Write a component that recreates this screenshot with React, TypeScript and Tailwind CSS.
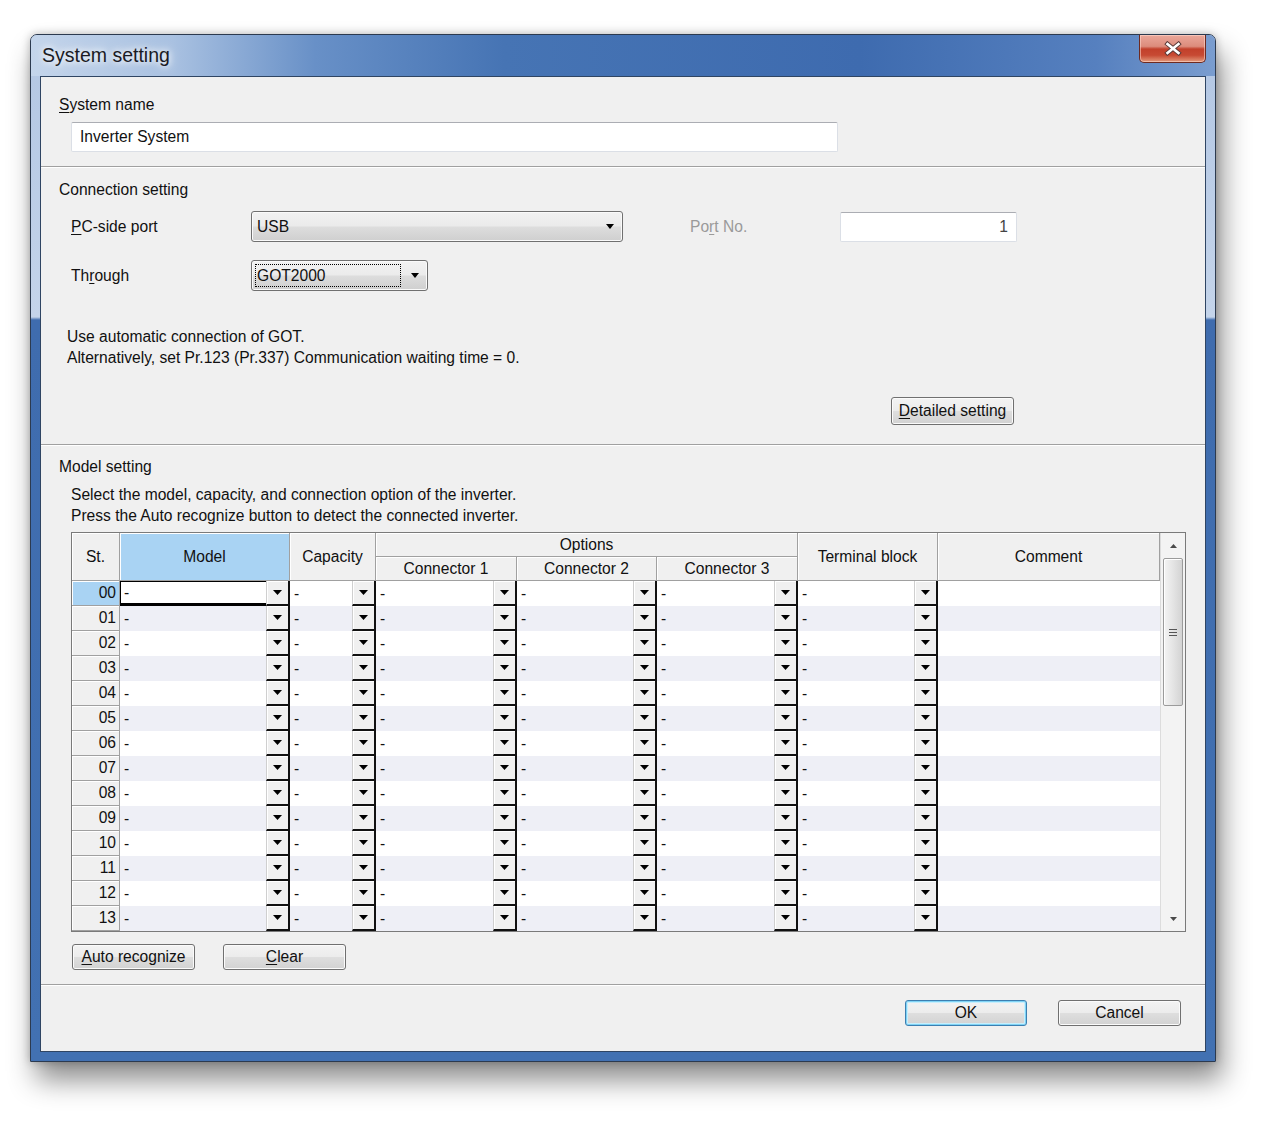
import React from "react";

const COLS = "grid grid-cols-[48px_170px_86px_141px_140px_141px_140px_222px]";
const HEAD =
  "flex items-center justify-center border-r border-b border-[#a0a0a0] bg-[#f0f0f0] shadow-[inset_1px_1px_0_#ffffff]";
const ROWS = ["00", "01", "02", "03", "04", "05", "06", "07", "08", "09", "10", "11", "12", "13"];

function Arrow({ w = 9, h = 5, color = "#000" }: { w?: number; h?: number; color?: string }) {
  return (
    <svg width={w} height={h} viewBox={`0 0 ${w} ${h}`} aria-hidden="true">
      <polygon points={`0,0 ${w},0 ${w / 2},${h}`} fill={color} />
    </svg>
  );
}

function WinButton({ children, wide = "w-[123px]", tall = "h-[26px]", primary = false }: {
  children: React.ReactNode;
  wide?: string;
  tall?: string;
  primary?: boolean;
}) {
  return (
    <button
      type="button"
      className={`${wide} ${tall} flex items-center justify-center rounded-[3px] border bg-[linear-gradient(to_bottom,#f3f3f3_0%,#ececec_48%,#dedede_52%,#d2d2d2_100%)] text-[15.6px] text-[#111] ${
        primary
          ? "border-[#3c7fb1] shadow-[inset_0_0_0_1px_#7fd3f5,inset_0_0_0_2px_#c8eefc]"
          : "border-[#707070] shadow-[inset_0_0_0_1px_#fbfbfb]"
      }`}
    >
      {children}
    </button>
  );
}

function Separator() {
  return <div className="h-[2px] border-t border-b border-t-[#a0a0a0] border-b-white" />;
}

function DropButton() {
  return (
    <span className="flex h-full w-[24px] items-center justify-center border-l border-l-[#cfcfcf] border-r-2 border-b-2 border-r-[#111] border-b-[#111] bg-[#f0f0f0] pb-[1px] shadow-[inset_1px_1px_0_#ffffff]">
      <Arrow />
    </span>
  );
}

function DropCell({ alt, editing = false }: { alt: boolean; editing?: boolean }) {
  return (
    <div className={`flex h-[25px] items-stretch ${alt ? "bg-[#eeeff6]" : "bg-white"}`}>
      {editing ? (
        <span className="flex flex-1 items-center border-t border-l border-b-[3px] border-black bg-white pl-[3px]">-</span>
      ) : (
        <span className="flex flex-1 items-center pl-[4px]">-</span>
      )}
      <DropButton />
    </div>
  );
}

function ScrollBar() {
  return (
    <div className="flex w-[25px] flex-col border-l border-l-[#dcdcdc] bg-[#f3f3f3]">
      <div className="flex h-[25px] items-center justify-center">
        <svg width="7" height="4" viewBox="0 0 7 4" aria-hidden="true">
          <polygon points="0,4 7,4 3.5,0" fill="#4a4a4a" />
        </svg>
      </div>
      <div className="mx-[2px] flex h-[148px] items-center justify-center rounded-[2px] border border-[#9b9b9b] bg-[linear-gradient(to_right,#f4f4f4,#e6e6e6_45%,#d3d3d3)] shadow-[inset_1px_1px_0_#ffffff]">
        <div className="flex flex-col gap-[2px]">
          <span className="h-[1px] w-[8px] bg-[#555]" />
          <span className="h-[1px] w-[8px] bg-[#555]" />
          <span className="h-[1px] w-[8px] bg-[#555]" />
        </div>
      </div>
      <div className="flex-1" />
      <div className="flex h-[25px] items-center justify-center">
        <Arrow w={7} h={4} color="#4a4a4a" />
      </div>
    </div>
  );
}

function ModelTable() {
  return (
    <div className="flex h-[400px] w-[1115px] border border-[#7a7a7a] bg-white">
      <div className="flex flex-col">
        <div className={`${COLS} grid-rows-[24px_24px]`}>
          <div className={`${HEAD} col-start-1 row-span-2 row-start-1`}>St.</div>
          <div className={`${HEAD} col-start-2 row-span-2 row-start-1 !bg-[#a9d3f3]`}>Model</div>
          <div className={`${HEAD} col-start-3 row-span-2 row-start-1`}>Capacity</div>
          <div className={`${HEAD} col-span-3 col-start-4 row-start-1`}>Options</div>
          <div className={`${HEAD} col-start-4 row-start-2`}>Connector 1</div>
          <div className={`${HEAD} col-start-5 row-start-2`}>Connector 2</div>
          <div className={`${HEAD} col-start-6 row-start-2`}>Connector 3</div>
          <div className={`${HEAD} col-start-7 row-span-2 row-start-1`}>Terminal block</div>
          <div className={`${HEAD} col-start-8 row-span-2 row-start-1`}>Comment</div>
        </div>
        {ROWS.map((r, i) => {
          const alt = i % 2 === 1;
          return (
            <div key={r} className={COLS}>
              <div
                className={`flex h-[25px] items-center justify-end border-r border-b border-[#a0a0a0] pr-[3px] shadow-[inset_1px_1px_0_#ffffff] ${
                  i === 0 ? "bg-[#a9d3f3]" : "bg-[#f0f0f0]"
                }`}
              >
                {r}
              </div>
              <DropCell alt={alt} editing={i === 0} />
              <DropCell alt={alt} />
              <DropCell alt={alt} />
              <DropCell alt={alt} />
              <DropCell alt={alt} />
              <DropCell alt={alt} />
              <div className={`h-[25px] ${alt ? "bg-[#eeeff6]" : "bg-white"}`} />
            </div>
          );
        })}
      </div>
      <ScrollBar />
    </div>
  );
}

export default function App() {
  return (
    <div className="min-h-[1127px] w-[1280px] bg-white pl-[30px] pt-[34px] font-['Liberation_Sans',Arial,sans-serif] text-[15.6px] text-[#111]">
      <div className="flex h-[1028px] w-[1186px] flex-col overflow-hidden rounded-t-[7px] border border-[#2c3a4f] bg-[linear-gradient(to_bottom,#b2c6e3_0px,#c4d4ea_282px,#3f6cae_285px,#4271b2_100%)] shadow-[6px_18px_28px_rgba(0,0,0,0.45),0_0_8px_rgba(0,0,0,0.25)]">
        {/* title bar */}
        <div className="flex h-[41px] items-start bg-[linear-gradient(to_right,#c4d5eb_0%,#a9c1e1_12%,#6890c7_24%,#4674b4_40%,#3e6baf_70%,#5680bf_90%,#7a9dcf_100%)]">
          <div className="flex h-full items-center pl-[11px] text-[19.5px] leading-none text-[#1b1b24] [text-shadow:0_0_6px_#ffffff,0_0_12px_#ffffff]">
            System setting
          </div>
          <div className="mr-[9px] ml-auto flex h-[28px] w-[67px] items-center justify-center rounded-b-[5px] border border-t-0 border-[#6e2a20] bg-[linear-gradient(to_bottom,#eaa79a_0%,#dc8c7c_42%,#c2402b_52%,#c74a33_75%,#e39a7c_100%)] shadow-[inset_0_0_0_1px_rgba(255,220,210,0.55)]">
            <svg width="18" height="15" viewBox="0 0 18 15" aria-hidden="true">
              <path d="M3.5 3 L14.5 12 M14.5 3 L3.5 12" stroke="#5a3a38" strokeWidth="4.5" strokeLinecap="square" />
              <path d="M3.5 3 L14.5 12 M14.5 3 L3.5 12" stroke="#ffffff" strokeWidth="2.6" strokeLinecap="square" />
            </svg>
          </div>
        </div>

        {/* client area */}
        <div className="mx-[9px] flex h-[976px] flex-col border border-[#2f4563] bg-[#f0f0f0]">
          {/* system name */}
          <div className="h-[89px] pt-[19px]">
            <div className="pl-[18px] leading-[18px]">
              <span className="underline underline-offset-2">S</span>ystem name
            </div>
            <div className="mt-[8px] ml-[30px] flex h-[30px] w-[767px] items-center rounded-[2px] border border-[#dbdfe6] border-t-[#abadb3] bg-white pl-[8px]">
              Inverter System
            </div>
          </div>
          <Separator />

          {/* connection setting */}
          <div className="h-[276px] pt-[13px]">
            <div className="pl-[18px] leading-[18px]">Connection setting</div>
            <div className="mt-[12px] flex h-[31px] items-center pl-[30px]">
              <span className="w-[180px]">
                <span className="underline underline-offset-2">P</span>C-side port
              </span>
              <div className="flex h-[31px] w-[372px] items-center rounded-[3px] border border-[#707070] bg-[linear-gradient(to_bottom,#f2f2f2_0%,#ebebeb_48%,#dddddd_52%,#cfcfcf_100%)] shadow-[inset_0_0_0_1px_#fafafa]">
                <span className="flex-1 pl-[5px]">USB</span>
                <span className="mr-[8px] flex">
                  <Arrow w={8} h={5} />
                </span>
              </div>
              <span className="ml-[67px] w-[150px] text-[#9a9a9a]">
                Po<span className="underline underline-offset-2">r</span>t No.
              </span>
              <div className="flex h-[30px] w-[177px] items-center justify-end rounded-[2px] border border-[#dbdfe6] border-t-[#abadb3] bg-white pr-[8px] text-[#444]">
                1
              </div>
            </div>
            <div className="mt-[18px] flex h-[31px] items-center pl-[30px]">
              <span className="w-[180px]">
                Th<span className="underline underline-offset-2">r</span>ough
              </span>
              <div className="flex h-[31px] w-[177px] items-center rounded-[3px] border border-[#707070] bg-[linear-gradient(to_bottom,#f2f2f2_0%,#ebebeb_48%,#dddddd_52%,#cfcfcf_100%)] shadow-[inset_0_0_0_1px_#fafafa]">
                <span className="ml-[3px] flex h-[23px] w-[146px] items-center border border-dotted border-black pl-[1px]">
                  GOT2000
                </span>
                <span className="flex-1" />
                <span className="mr-[8px] flex">
                  <Arrow w={8} h={5} />
                </span>
              </div>
            </div>
            <div className="mt-[35px] pl-[26px] leading-[21px]">
              <p>Use automatic connection of GOT.</p>
              <p>Alternatively, set Pr.123 (Pr.337) Communication waiting time = 0.</p>
            </div>
            <div className="mt-[29px] pl-[850px]">
              <WinButton tall="h-[28px]">
                <span className="underline underline-offset-2">D</span>etailed setting
              </WinButton>
            </div>
          </div>
          <Separator />

          {/* model setting */}
          <div className="h-[538px] pt-[12px]">
            <div className="pl-[18px] leading-[18px]">Model setting</div>
            <div className="mt-[8px] pl-[30px] leading-[21px]">
              <p>Select the model, capacity, and connection option of the inverter.</p>
              <p>Press the Auto recognize button to detect the connected inverter.</p>
            </div>
            <div className="mt-[6px] ml-[30px]">
              <ModelTable />
            </div>
            <div className="mt-[12px] ml-[31px] flex gap-[28px]">
              <WinButton>
                <span className="underline underline-offset-2">A</span>uto recognize
              </WinButton>
              <WinButton>
                <span className="underline underline-offset-2">C</span>lear
              </WinButton>
            </div>
          </div>
          <Separator />

          {/* footer */}
          <div className="flex justify-end gap-[31px] pt-[14px] pr-[24px]">
            <WinButton wide="w-[122px]" primary>
              OK
            </WinButton>
            <WinButton>Cancel</WinButton>
          </div>
        </div>
      </div>
    </div>
  );
}
